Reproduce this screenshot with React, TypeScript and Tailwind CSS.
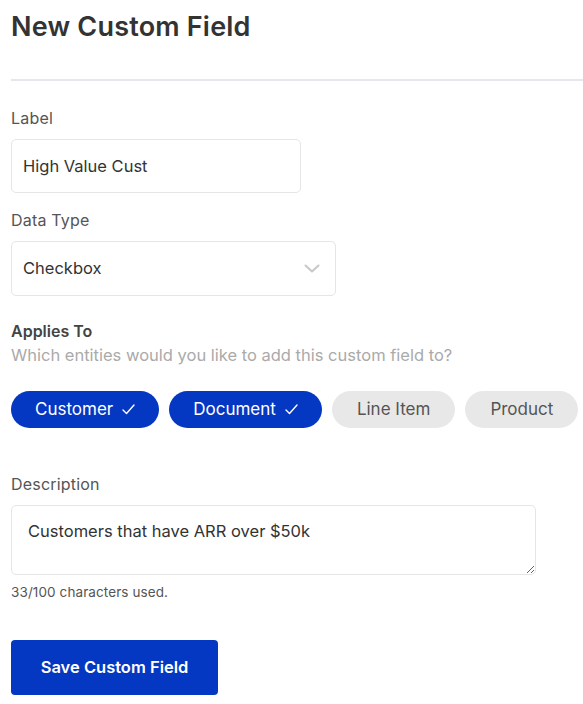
const entities = [
  { name: 'Customer', on: true },
  { name: 'Document', on: true },
  { name: 'Line Item', on: false },
  { name: 'Product', on: false },
]

export default function App() {
  return (
    <div className="min-h-screen bg-white pl-[11px] font-['Inter',sans-serif] text-[#3b3b3b]">
      <h1 className="pt-[10px] text-[27px] font-semibold leading-[34px] tracking-[0.2px] text-[#333]">New Custom Field</h1>
      <div className="mt-[35px] h-[2px] bg-[#e6e6ec]" />

      <div className="mt-[27px] text-[16px] leading-[20px] tracking-[0.2px] text-[#555]">Label</div>
      <div className="mt-[11px] flex h-[54px] w-[290px] items-center rounded-[5px] border border-[#e5e5e5] px-[11px] text-[16.5px] text-[#333]">
        High Value Cust
      </div>

      <div className="mt-[17px] text-[16px] leading-[20px] tracking-[0.2px] text-[#555]">Data Type</div>
      <div className="mt-[11px] flex h-[55px] w-[325px] items-center justify-between rounded-[5px] border border-[#e5e5e5] pl-[11px] pr-[15px] text-[16.5px] text-[#333]">
        <span>Checkbox</span>
        <svg width="16" height="9" viewBox="0 0 16 9" fill="none" className="text-[#c8c8c8]">
          <polyline points="1.5,1.5 8,7.5 14.5,1.5" stroke="currentColor" strokeWidth="2" strokeLinecap="round" strokeLinejoin="round" />
        </svg>
      </div>

      <div className="mt-[25px] text-[16px] font-semibold leading-[20px] text-[#444]">Applies To</div>
      <div className="mt-[4px] text-[16.5px] leading-[20px] text-[#aaa]">Which entities would you like to add this custom field to?</div>

      <div className="mt-[26px] flex gap-[10px]">
        {entities.map((e) =>
          e.on ? (
            <button
              key={e.name}
              className="flex h-[37px] items-center rounded-full bg-[#0438c2] px-[24px] text-[17px] text-white"
            >
              {e.name}
              <svg width="13" height="11" viewBox="0 0 13 11" fill="none" className="ml-[9px]">
                <polyline points="1,6 4.5,9.5 12,1" stroke="currentColor" strokeWidth="1.4" strokeLinecap="round" strokeLinejoin="round" />
              </svg>
            </button>
          ) : (
            <button
              key={e.name}
              className="flex h-[37px] items-center rounded-full bg-[#e8e8e8] px-[25px] text-[17px] text-[#555]"
            >
              {e.name}
            </button>
          )
        )}
      </div>

      <div className="mt-[46px] text-[16px] leading-[20px] tracking-[0.2px] text-[#555]">Description</div>
      <textarea
        readOnly
        defaultValue="Customers that have ARR over $50k"
        className="mt-[11px] block h-[70px] w-[525px] rounded-[5px] border border-[#e5e5e5] px-[16px] py-[14px] text-[16.5px] leading-[22px] text-[#333] outline-none"
      />
      <div className="mt-[8px] text-[13.5px] leading-[18px] tracking-[0.1px] text-[#555]">33/100 characters used.</div>

      <button className="mt-[39px] h-[55px] w-[207px] rounded-[4px] bg-[#0438c2] text-[16.5px] font-semibold text-white">
        Save Custom Field
      </button>
    </div>
  )
}
